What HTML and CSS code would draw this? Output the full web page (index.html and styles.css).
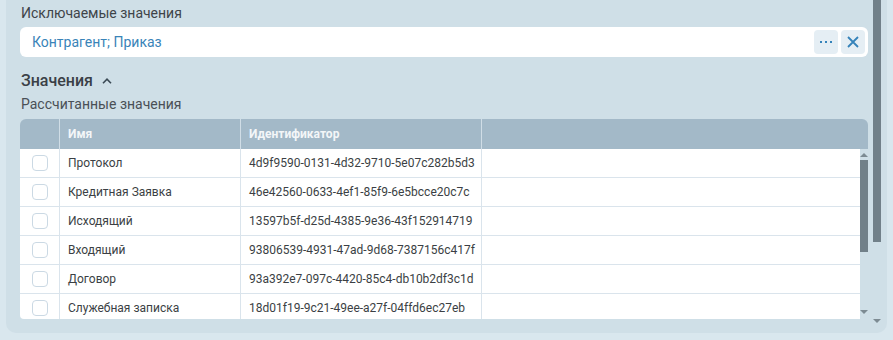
FILE: index.html
```html
<!DOCTYPE html>
<html lang="ru">
<head>
<meta charset="utf-8">
<link rel="stylesheet" href="styles.css">
</head>
<body>
<div class="panel">
  <div class="content">
    <div class="label">Исключаемые значения</div>
    <div class="input">
      <span class="input-text">Контрагент; Приказ</span>
      <div class="btns">
        <button class="btn" aria-label="Выбрать">
          <svg width="12" height="4" viewBox="0 0 12 4"><rect x="0" y="1" width="2" height="2" fill="#3583ba"/><rect x="5" y="1" width="2" height="2" fill="#3583ba"/><rect x="10" y="1" width="2" height="2" fill="#3583ba"/></svg>
        </button>
        <button class="btn" aria-label="Очистить">
          <svg width="12" height="12" viewBox="0 0 12 12"><path d="M1 1 L11 11 M11 1 L1 11" stroke="#3583ba" stroke-width="1.8" fill="none"/></svg>
        </button>
      </div>
    </div>
    <div class="section-title">Значения
      <svg class="chev" width="10" height="6" viewBox="0 0 10 6"><path d="M1 5.2 L5 1.2 L9 5.2" stroke="#3b4a55" stroke-width="1.6" fill="none"/></svg>
    </div>
    <div class="sublabel">Рассчитанные значения</div>
    <div class="table">
      <div class="thead">
        <div class="c c-check"></div>
        <div class="c c-name">Имя</div>
        <div class="c c-id">Идентификатор</div>
        <div class="c c-rest"></div>
      </div>
      <div class="tbody-wrap">
        <div class="tbody">
          <div class="row"><div class="c c-check"><span class="cb"></span></div><div class="c c-name">Протокол</div><div class="c c-id">4d9f9590-0131-4d32-9710-5e07c282b5d3</div><div class="c c-rest"></div></div>
          <div class="row"><div class="c c-check"><span class="cb"></span></div><div class="c c-name">Кредитная Заявка</div><div class="c c-id">46e42560-0633-4ef1-85f9-6e5bcce20c7c</div><div class="c c-rest"></div></div>
          <div class="row"><div class="c c-check"><span class="cb"></span></div><div class="c c-name">Исходящий</div><div class="c c-id">13597b5f-d25d-4385-9e36-43f152914719</div><div class="c c-rest"></div></div>
          <div class="row"><div class="c c-check"><span class="cb"></span></div><div class="c c-name">Входящий</div><div class="c c-id">93806539-4931-47ad-9d68-7387156c417f</div><div class="c c-rest"></div></div>
          <div class="row"><div class="c c-check"><span class="cb"></span></div><div class="c c-name">Договор</div><div class="c c-id">93a392e7-097c-4420-85c4-db10b2df3c1d</div><div class="c c-rest"></div></div>
          <div class="row"><div class="c c-check"><span class="cb"></span></div><div class="c c-name">Служебная записка</div><div class="c c-id">18d01f19-9c21-49ee-a27f-04ffd6ec27eb</div><div class="c c-rest"></div></div>
        </div>
        <div class="vscroll">
          <span class="arr up"></span>
          <span class="thumb"></span>
          <span class="fill"></span>
          <span class="arr down"></span>
        </div>
      </div>
    </div>
  </div>
  <div class="outer-scroll">
    <span class="othumb"></span>
    <span class="fill"></span>
    <span class="arr down"></span>
  </div>
</div>
</body>
</html>
```

FILE: styles.css
```css
* { box-sizing: border-box; }
html, body { margin: 0; padding: 0; }
body {
  width: 893px;
  height: 340px;
  overflow: hidden;
  background: #d9e7ee;
  font-family: Roboto, "Liberation Sans", sans-serif;
  color: #3a3f44;
}
.panel {
  margin: 0 6px 0 6px;
  height: 333px;
  background: #cfdfe7;
  border-radius: 0 0 10px 10px;
  display: flex;
  padding: 0 6px 0 14px;
}
.content {
  width: 848px;
  padding-top: 4px;
}
.label {
  font-size: 14px;
  line-height: 18px;
  color: #3e4449;
  padding-left: 1px;
}
.input {
  margin-top: 5px;
  height: 30px;
  background: #fff;
  border-radius: 6px;
  display: flex;
  align-items: center;
  padding: 0 3px 0 12px;
}
.input-text {
  flex: 1;
  font-size: 14px;
  color: #3a84b8;
}
.btns { display: flex; gap: 3px; }
.btn {
  width: 24px;
  height: 24px;
  border: 0;
  padding: 0;
  border-radius: 4px;
  background: #e5eef4;
  display: flex;
  align-items: center;
  justify-content: center;
}
.section-title {
  margin-top: 14px;
  font-size: 16px;
  line-height: 20px;
  font-weight: 500;
  color: #3a4046;
  display: flex;
  align-items: center;
  padding-left: 1px;
}
.chev { margin-left: 9px; margin-top: -1px; }
.sublabel {
  margin-top: 4px;
  font-size: 14px;
  line-height: 18px;
  color: #4a5056;
  padding-left: 1px;
}
.table { margin-top: 6px; }
.thead {
  height: 30px;
  background: #a3b9c8;
  border-radius: 6px 6px 0 0;
  display: flex;
}
.thead .c {
  font-size: 12px;
  font-weight: 700;
  color: #f3f6f8;
  line-height: 30px;
  border-right: 1px solid #d0dde6;
}
.thead .c-rest { border-right: 0; }
.c { flex: none; }
.c-check { width: 40px; border-right: 1px solid #dae4ec; }
.c-name { width: 181px; padding-left: 8px; border-right: 1px solid #dae4ec; }
.c-id { width: 241px; padding-left: 8px; border-right: 1px solid #dae4ec; }
.c-rest { flex: 1; }
.tbody-wrap {
  height: 170px;
  display: flex;
}
.tbody {
  width: 840px;
  height: 170px;
  overflow: hidden;
  background: #fff;
  border-radius: 0 0 0 4px;
}
.row {
  display: flex;
  height: 29px;
  border-bottom: 1px solid #dae4ec;
}
.row .c {
  font-size: 12px;
  line-height: 28px;
  color: #3b3f44;
}
.row .c-check {
  display: flex;
  align-items: center;
  padding-left: 12px;
}
.cb {
  width: 16px;
  height: 16px;
  border: 1px solid #cbd9e4;
  border-radius: 4px;
  background: #fff;
}
.vscroll {
  width: 8px;
  display: flex;
  flex-direction: column;
  align-items: center;
}
.thumb {
  width: 8px;
  height: 92px;
  background: #718089;
  margin-top: 3px;
}
.fill { flex: 1; }
.arr { width: 0; height: 0; border-left: 4px solid transparent; border-right: 4px solid transparent; }
.arr.up { border-bottom: 4px solid #7d8b93; margin-top: 4px; }
.arr.down { border-top: 4px solid #7d8b93; margin-bottom: 5px; }
.outer-scroll {
  width: 8px;
  margin-left: 5px;
  display: flex;
  flex-direction: column;
  align-items: center;
}
.othumb {
  width: 8px;
  height: 242px;
  background: #718089;
}
.outer-scroll .arr.down { margin-bottom: 10px; }
```
